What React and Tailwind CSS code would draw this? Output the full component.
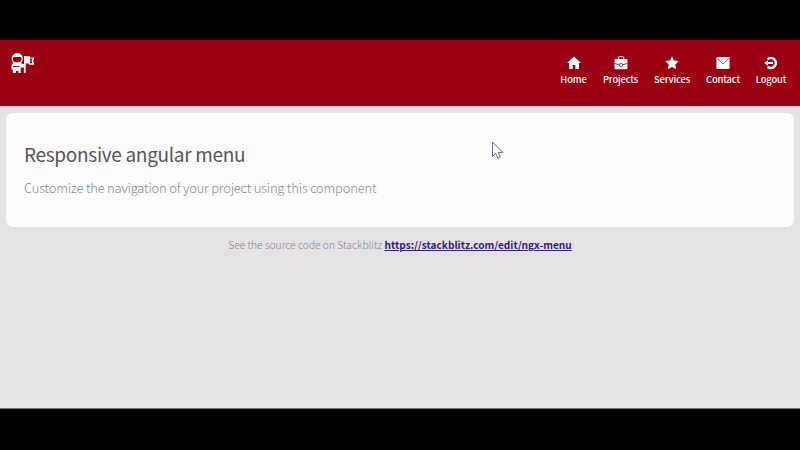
import React from "react";

const icons = {
  Home: <path fill="#fff" d="M7 .5 0 7h2v6h3.7V9h2.6v4H12V7h2z" />,
  Projects: (
    <>
      <path fill="none" stroke="#fff" strokeWidth="1" d="M4.3 3.5V1.6q0-.9.9-.9h3.6q.9 0 .9.9v1.9" />
      <rect x=".5" y="3" width="13" height="10.3" rx="1" fill="#fff" />
      <path fill="none" stroke="#9b0013" strokeWidth=".8" d="M.5 7.4 5 8.7m4 0 4.5-1.3" />
      <circle cx="7" cy="8.9" r="1.7" fill="#fff" stroke="#9b0013" strokeWidth=".8" />
    </>
  ),
  Services: <path fill="#fff" d="m7 .2 2 4.3 4.8.6-3.5 3.3.9 4.8L7 10.9l-4.2 2.3.9-4.8L.2 5.1 5 4.5z" />,
  Contact: (
    <>
      <rect x=".4" y="1" width="13.2" height="12" rx="1" fill="#fff" />
      <path fill="none" stroke="#9b0013" strokeWidth=".7" d="m1.2 2.3 4.9 5q.9.8 1.8 0l4.9-5" />
    </>
  ),
  Logout: (
    <>
      <path fill="none" stroke="#fff" strokeWidth="2.6" d="M3.6 3.2a5 5 0 1 1 0 7.6" />
      <path fill="#fff" d="M.2 7 4 4v2h5v2H4v2z" />
    </>
  ),
};

const items = [
  ["Home", "w-[27px]"],
  ["Projects", "w-[35px]"],
  ["Services", "w-[36px]"],
  ["Contact", "w-[34px]"],
  ["Logout", "w-[30px]"],
];

function Logo() {
  return (
    <svg className="h-[21px] w-6 shrink-0" viewBox="0 0 24 21" aria-hidden="true">
      <path fill="#fff" d="M3.4.8Q6.3-.6 9.2.8 11.9 2.4 11.8 6q-.1 2.4-1.8 3.9l1.5 1.1h1.6V3h1.6v.2h4.3v1.2h4.3l-1 3.6 1 3.7h-5.2v-1.3h-3.4V20h-1.8v-5.6h-3.2v5.5H7.5v-2H5v2H1.8v-3.2H.5v-4.1q0-1.6 1.8-2.7Q.7 8.4.7 5.8.7 2.3 3.4.8" />
      <path fill="#9b0013" d="M3 4h6.6q.9 0 .9.8v2.3Q9.7 9.2 8.5 9.2H4Q2.7 9.2 2 7.2V4.8Q2 4 3 4" />
      <path fill="none" stroke="#9b0013" strokeWidth="1" d="M2 13.5h6.5" />
      <path fill="#9b0013" d="M18.9 5.4h2.4l-.7 2.4.7 2.5h-2.4V9l.7-1.2-.7-1.2z" />
    </svg>
  );
}

export default function App() {
  return (
    <div className="flex h-[450px] w-[800px] flex-col overflow-hidden bg-black pt-10 pb-[41px] font-['Noto_Sans_CJK_SC','Open_Sans',sans-serif]">
      <header className="flex h-[66px] shrink-0 items-start justify-between bg-[#9b0013] pl-[11px] pr-[14px] pt-[13px]">
        <Logo />
        <nav className="flex gap-4 pt-[3px]">
          {items.map(([name, width]) => (
            <a key={name} className={`flex flex-col items-center text-white ${width}`}>
              <svg className="h-[14px] w-[14px]" viewBox="0 0 14 14" aria-hidden="true">
                {icons[name]}
              </svg>
              <span className="mt-[2px] whitespace-nowrap text-[9.4px] font-medium leading-[14px] tracking-[-0.15px]">{name}</span>
            </a>
          ))}
        </nav>
      </header>
      <main className="relative grow border-t border-[#e9cdd0] bg-[#e4e2e5] px-[6px] pt-[6px]">
        <section className="h-[114px] rounded-[7px] bg-[#fefdfe] px-[18px] pt-[27px]">
          <h1 className="whitespace-nowrap text-[19px] font-normal leading-7 tracking-[-0.31px] text-[#555456]">Responsive angular menu</h1>
          <p className="mt-[10px] whitespace-nowrap text-[13px] font-light leading-5 tracking-[-0.22px] text-[#8a898c]">
            Customize the navigation of your project using this component
          </p>
        </section>
        <p className="mt-[8px] whitespace-nowrap text-center text-[10.25px] font-light leading-5 text-[#858487]">
          See the source code on Stackblitz{" "}
          <a className="text-[10.1px] font-bold text-[#33207f] underline">https://stackblitz.com/edit/ngx-menu</a>
        </p>
        <svg className="absolute left-[491px] top-[34px] h-[19px] w-[14px]" viewBox="0 0 14 19" aria-hidden="true">
          <path d="M1.5 1v14.5l3.2-3.2 2.1 4.8 2.5-1.1-2-4.6h4.5z" fill="#fff" stroke="#68668f" strokeWidth="1" />
        </svg>
      </main>
      <div className="h-px shrink-0 bg-[#777]" />
    </div>
  );
}
